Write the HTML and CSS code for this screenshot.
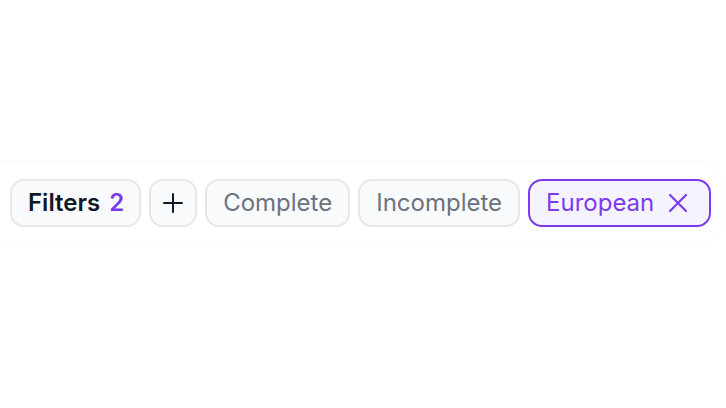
FILE: index.html
```html
<!DOCTYPE html>
<html lang="en">
<head>
<meta charset="utf-8">
<title>Filters</title>
<link rel="stylesheet" href="styles.css">
</head>
<body>
<div class="bar">
  <button class="chip chip-title">Filters <span class="count">2</span></button>
  <button class="chip chip-add" aria-label="Add filter">
    <svg width="22" height="22" viewBox="0 0 22 22" fill="none" stroke="#111827" stroke-width="2" stroke-linecap="round"><path d="M11 2v18M2 11h18"/></svg>
  </button>
  <button class="chip">Complete</button>
  <button class="chip">Incomplete</button>
  <button class="chip chip-active">European
    <svg class="x" width="20" height="20" viewBox="0 0 20 20" fill="none" stroke="currentColor" stroke-width="2.2" stroke-linecap="round"><path d="M2 2l16 16M18 2L2 18"/></svg>
  </button>
</div>
</body>
</html>
```
FILE: styles.css
```css
html, body {
  margin: 0;
  padding: 0;
  background: #ffffff;
}
body {
  height: 408px;
  display: flex;
  align-items: center;
  font-family: Inter, "Noto Sans", sans-serif;
}
.bar {
  display: flex;
  gap: 8px;
  padding: 18px 11px 18px 10px;
  margin-top: -3px;
  border: 1px dotted #f3f3f5;
  border-left: none;
  border-radius: 0 26px 26px 0;
  box-sizing: border-box;
}
.chip {
  height: 48px;
  box-sizing: border-box;
  display: inline-flex;
  align-items: center;
  gap: 10px;
  padding: 0 16px;
  border: 2px solid #e5e7eb;
  border-radius: 14px;
  background: #f9fafb;
  color: #6b7280;
  font-family: Inter, "Noto Sans", sans-serif;
  font-size: 24px;
  font-weight: 400;
  line-height: 1;
  cursor: pointer;
}
.chip-title {
  color: #111827;
  font-weight: 600;
  gap: 9px;
  padding: 0 15px 0 16px;
}
.count {
  color: #7c3aed;
}
.chip-add {
  width: 48px;
  padding: 0;
  justify-content: center;
}
.chip-active {
  border-color: #7c3aed;
  background: #f5f3ff;
  color: #7c3aed;
  gap: 14px;
  padding-right: 21px;
}
.x {
  display: block;
}
```
